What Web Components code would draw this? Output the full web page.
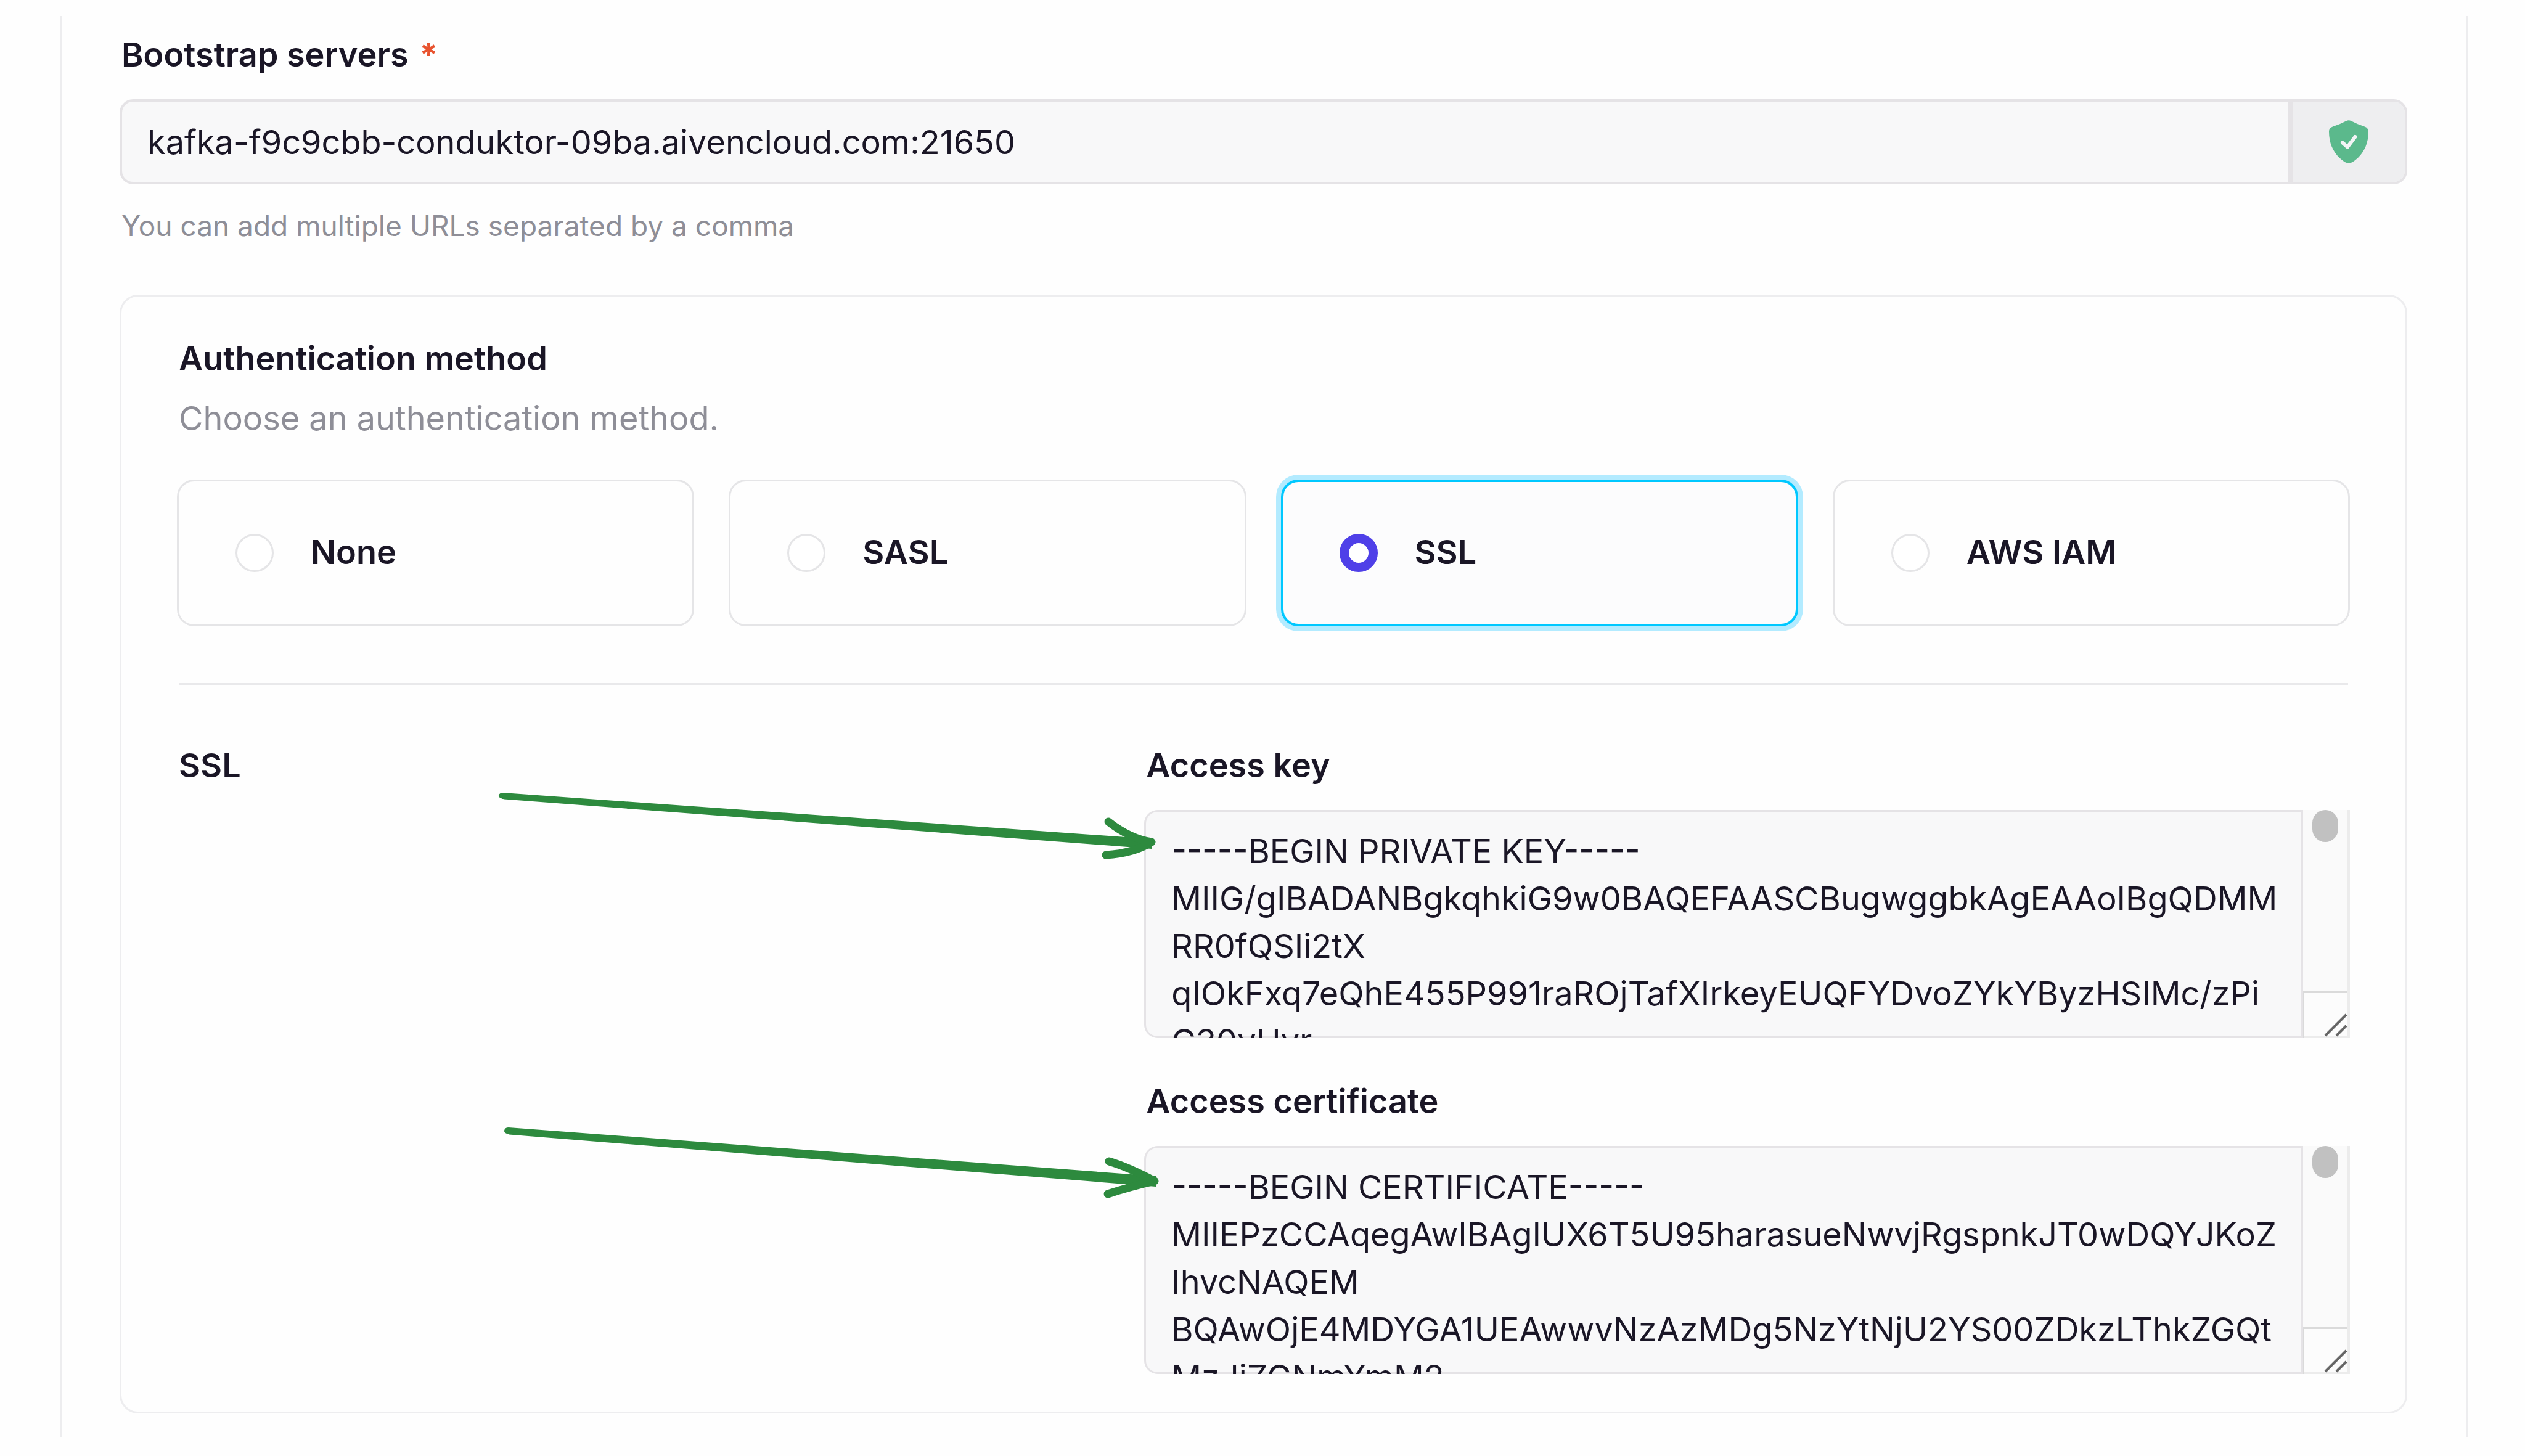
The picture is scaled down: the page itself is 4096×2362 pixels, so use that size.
<!DOCTYPE html>
<html lang="en">
<head>
<meta charset="utf-8">
<title>Cluster configuration</title>
<style>
  body {
    margin: 0;
    background: #fefefe;
    color: #1a1626;
    font: 400 54px/77px Inter, "Liberation Sans", sans-serif;
    --muted: #8e8e97;
    --line: #e5e3e6;
    --line-soft: #ededef;
    --field: #f8f8f9;
  }
</style>
</head>
<body>
<cluster-form></cluster-form>

<script>
const define = (name, html, setup) => {
  const template = document.createElement('template');
  template.innerHTML = html;
  customElements.define(name, class extends HTMLElement {
    connectedCallback() {
      if (this.shadowRoot) return;
      this.attachShadow({ mode: 'open' }).append(template.content.cloneNode(true));
      if (setup) setup(this, this.shadowRoot);
    }
  });
};

define('shield-icon', `
  <style>
    :host { display: block; width: 64px; height: 70px; }
    svg { display: block; }
  </style>
  <svg width="64" height="70" viewBox="0 0 64 70" aria-hidden="true">
    <path fill="#5bb98c" d="M28 1.2Q32-.6 36 1.2Q46 6.6 58 10.4Q64 12.6 64 18.5C64 41 54 58 38 68Q32 71.400 26 68C10 58 0 41 0 18.500Q0 12.600 6 10.400Q18 6.600 28 1.200Z"/>
    <path fill="none" stroke="#f3f4f5" stroke-width="6" stroke-linecap="round" stroke-linejoin="round" d="M22 36.500L30 43.500L42.500 27"/>
  </svg>`);

define('server-input', `
  <style>
    :host { display: block; }
    label { display: block; margin-bottom: 34px; font-weight: 600; }
    .star { margin-left: 4px; font-weight: 700; color: #e8532f; }
    .box {
      display: flex; height: 138px; margin: 0 -3px; box-sizing: border-box;
      border: 4px solid var(--line); border-radius: 22px; background: var(--field); overflow: hidden;
    }
    input {
      flex: 1; min-width: 0; border: 0; outline: 0; padding: 0 41px; background: none;
      font: inherit; color: inherit;
    }
    .addon {
      display: flex; align-items: center; justify-content: center; width: 182px;
      border-left: 7px solid var(--line); background: #eeeef0;
    }
    p { margin: 34px 0 0; font-size: 46px; line-height: 66px; color: var(--muted); }
  </style>
  <label for="servers">Bootstrap servers <span class="star">*</span></label>
  <div class="box">
    <input id="servers" type="text" value="kafka-f9c9cbb-conduktor-09ba.aivencloud.com:21650" aria-describedby="hint">
    <div class="addon"><shield-icon></shield-icon></div>
  </div>
  <p id="hint">You can add multiple URLs separated by a comma</p>`);

define('method-picker', `
  <style>
    :host { display: block; }
    fieldset { display: grid; grid-template-columns: repeat(4, 1fr); gap: 56px; margin: 0 -3px; padding: 0; border: 0; }
    label {
      display: flex; align-items: center; gap: 60px; height: 238px; padding: 0 92px;
      box-sizing: border-box; border: 3px solid #e5e5e7; border-radius: 28px; font-weight: 600;
    }
    span { padding-bottom: 4px; }
    input {
      appearance: none; width: 62px; height: 62px; margin: 0; box-sizing: border-box; flex: none;
      border: 3px solid #e5e5e7; border-radius: 50%; background: #fff;
    }
    input:checked { border: 15px solid #4f40e8; }
    label:has(:checked) { border: 4px solid #00c8ff; padding: 0 91px; background: #fcfcfd; box-shadow: 0 0 0 8px #b3ebff; }
  </style>
  <fieldset aria-label="Authentication method"></fieldset>`,
  (host, root) => {
    const set = root.querySelector('fieldset');
    for (const name of host.getAttribute('options').split(',')) {
      const label = document.createElement('label');
      const input = document.createElement('input');
      const text = document.createElement('span');
      input.type = 'radio';
      input.name = 'method';
      input.value = name;
      input.checked = name === host.getAttribute('value');
      text.textContent = name;
      label.append(input, text);
      set.append(label);
    }
  });

define('pem-field', `
  <style>
    :host { display: block; }
    label { display: block; margin-bottom: 34px; font-weight: 600; }
    .box { display: flex; height: 370px; margin: 0 -3px; }
    textarea {
      flex: 1; min-width: 0; margin: 0; padding: 28px 0 0 44px; box-sizing: border-box;
      border: 0; outline: 0; border-radius: 22px 0 0 22px; resize: none; overflow: hidden;
      white-space: pre; background: var(--field); box-shadow: inset 0 0 0 3px var(--line);
      font: inherit; color: inherit;
    }
    .rail {
      display: flex; flex-direction: column; align-items: center; width: 76px; box-sizing: border-box;
      border-right: 4px solid #ececec; background: #fafafa;
    }
    .thumb { width: 42px; height: 52px; border-radius: 21px; background: #c1c1c1; }
    .corner { margin-top: auto; align-self: stretch; height: 76px; box-sizing: border-box; border: solid #dadada; border-width: 3px 0 0 2px; background: #fcfcfc; }
    svg { display: block; margin-left: auto; }
  </style>
  <label for="pem"></label>
  <div class="box">
    <textarea id="pem" spellcheck="false"></textarea>
    <div class="rail" aria-hidden="true">
      <div class="thumb"></div>
      <div class="corner">
        <svg width="70" height="73" viewBox="0 0 70 73">
          <path d="M0 71H70" stroke="#ececec" stroke-width="4"/>
          <path d="M34 69L68 35M52 69L68 53" stroke="#666" stroke-width="4"/>
        </svg>
      </div>
    </div>
  </div>`,
  (host, root) => {
    root.querySelector('label').textContent = host.getAttribute('label');
    root.querySelector('textarea').value = host.textContent.trim();
  });

define('pointer-arrows', `
  <style>
    :host { position: absolute; top: 0; left: 0; pointer-events: none; }
    svg { display: block; }
  </style>
  <svg width="1900" height="1960" viewBox="0 0 1900 1960" aria-hidden="true" fill="none" stroke="#2d8a3e" stroke-width="13" stroke-linecap="round" stroke-linejoin="round">
    <path fill="#2d8a3e" stroke="none" d="M816 1286L1868 1361V1377L818 1296.500Q809 1295 809 1290.500Q810 1286 816 1286Z"/>
    <path d="M1798 1333Q1832 1360 1868 1366Q1840 1384 1794 1387"/>
    <path fill="#2d8a3e" stroke="none" d="M825 1829L1875 1908V1925L826 1840.500Q817 1838 818 1834Q819 1829 825 1829Z"/>
    <path d="M1799 1884Q1832 1894 1873 1916Q1830 1926 1797 1937"/>
  </svg>`);

define('auth-panel', `
  <style>
    :host {
      display: block; margin: 79px -3px 0; padding: 62px 93px 61px;
      border: 3px solid var(--line-soft); border-radius: 30px;
    }
    h2 { margin: 0; font-size: 54px; line-height: 77px; font-weight: 600; }
    p { margin: 20px 0 61px; color: var(--muted); }
    hr { margin: 92px 0; border: 0; border-top: 3px solid #e9e9eb; }
    .settings { display: grid; grid-template-columns: 33fr 41fr; }
    .fields { display: flex; flex-direction: column; gap: 64px; }
  </style>
  <h2>Authentication method</h2>
  <p>Choose an authentication method.</p>
  <method-picker options="None,SASL,SSL,AWS IAM" value="SSL"></method-picker>
  <hr>
  <div class="settings">
    <h2>SSL</h2>
    <div class="fields"><slot></slot></div>
  </div>`);

define('cluster-form', `
  <style>
    :host { display: block; padding: 26px 93px 27px 98px; }
    main { padding: 24px 98px 38px 96px; border: solid var(--line-soft); border-width: 0 3px; }
  </style>
  <main>
    <server-input></server-input>
    <auth-panel>
      <pem-field label="Access key">-----BEGIN PRIVATE KEY-----
MIIG/gIBADANBgkqhkiG9w0BAQEFAASCBugwggbkAgEAAoIBgQDMM
RR0fQSIi2tX
qIOkFxq7eQhE455P991raROjTafXIrkeyEUQFYDvoZYkYByzHSIMc/zPi
C30yUyr</pem-field>
      <pem-field label="Access certificate">-----BEGIN CERTIFICATE-----
MIIEPzCCAqegAwIBAgIUX6T5U95harasueNwvjRgspnkJT0wDQYJKoZ
IhvcNAQEM
BQAwOjE4MDYGA1UEAwwvNzAzMDg5NzYtNjU2YS00ZDkzLThkZGQt
MzJjZGNmYmM2</pem-field>
    </auth-panel>
  </main>
  <pointer-arrows></pointer-arrows>`);
</script>
</body>
</html>
